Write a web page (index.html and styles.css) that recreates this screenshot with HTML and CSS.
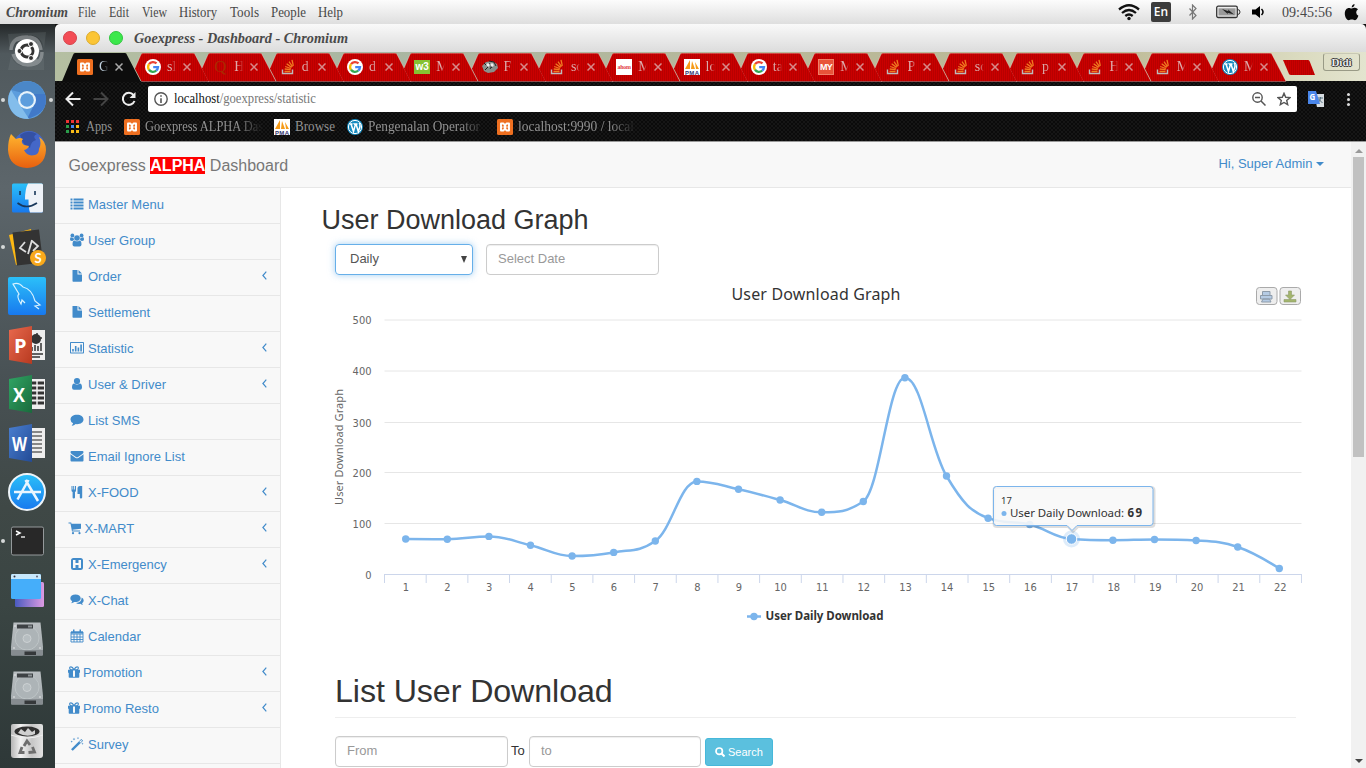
FILE: index.html
```html
<!DOCTYPE html>
<html lang="en">
<head>
<meta charset="utf-8">
<title>Goexpress - Dashboard</title>
<link rel="stylesheet" href="styles.css">
</head>
<body>
<svg width="0" height="0" class="defs">
  <defs>
    <linearGradient id="sky" x2="0" y2="1"><stop stop-color="#2bc0f9"/><stop offset="1" stop-color="#1879ee"/></linearGradient>
    <linearGradient id="red" x2="1" y2="1"><stop stop-color="#e8694e"/><stop offset="1" stop-color="#b83a20"/></linearGradient>
    <linearGradient id="green" x2="1" y2="1"><stop stop-color="#30a564"/><stop offset="1" stop-color="#1a6a3c"/></linearGradient>
    <linearGradient id="blue" x2="1" y2="1"><stop stop-color="#4a7fd0"/><stop offset="1" stop-color="#234b96"/></linearGradient>
    <linearGradient id="fox" x2="0" y2="1"><stop stop-color="#ffb52e"/><stop offset="1" stop-color="#e8600f"/></linearGradient>
    <linearGradient id="metal" x2="0" y2="1"><stop stop-color="#b9bec1"/><stop offset="1" stop-color="#a2a9ac"/></linearGradient>
    <linearGradient id="bin"><stop stop-color="#b5b5b5"/><stop offset=".3" stop-color="#f2f2f2"/><stop offset=".65" stop-color="#c6c6c6"/><stop offset="1" stop-color="#e2e2e2"/></linearGradient>
    <linearGradient id="violet"><stop stop-color="#4a5bc0"/><stop offset="1" stop-color="#dd9ae2"/></linearGradient>
    <pattern id="stripes" width="2" height="4" patternUnits="userSpaceOnUse"><rect width="2" height="4" fill="#ca0000"/><rect width="1" height="4" fill="#b80000"/></pattern>
  </defs>
  <symbol id="tab" viewBox="0 0 81 29"><path d="M5.9 15.4 12 1.5Q12.600 0 14 0H64Q65.500 0 66 1.500L80 28.500H12.600Z" fill="url(#stripes)"/><path d="M5.900 15.400 12 1.500Q12.600.5 14 .5H64Q65.500.5 66 1.500L80 28.500H12" fill="none" stroke="#fff" stroke-opacity=".28"/></symbol>
  <symbol id="close" viewBox="0 0 8 8"><path d="M.5.5l7 7m0-7l-7 7" stroke="currentColor" stroke-width="1.500"/></symbol>
  <symbol id="google" viewBox="0 0 16 16"><circle cx="8" cy="8" r="8" fill="#fff"/><g fill="none" stroke-width="2.300"><path d="M4 5.200A5 5 0 0 1 11.500 4.400" stroke="#ea4335"/><path d="M4 5.200a5 5 0 0 0 0 5.600" stroke="#fbbc05"/><path d="M4 10.800a5 5 0 0 0 7.200.9" stroke="#34a853"/><path d="M11.200 11.700A5 5 0 0 0 13 8.200H8.200" stroke="#4285f4"/></g></symbol>
  <symbol id="xampp" viewBox="0 0 16 16"><rect width="16" height="16" rx="1.500" fill="#ee6f20"/><path d="M4 4.500h2.500L8 6.500l1.500-2H12v3l-.7.500.7.500v3H9.500L8 9.500l-1.500 2H4v-3L4.700 8 4 7.500z" fill="none" stroke="#fff" stroke-width="1.900" stroke-linejoin="round"/><path d="M6.500 8h3" stroke="#fff" stroke-width="2.500"/></symbol>
  <symbol id="so" viewBox="0 0 16 16"><path d="M2.500 10.500v4h10v-4" fill="none" stroke="#bcbbbb" stroke-width="1.400"/><path d="M4.500 12.500h6M4.700 10l6 .7M5.200 7.500l5.700 2M6.600 4.800l5 3.600M9 2.600l3.500 5M12 .8l1.300 6" stroke="#f07b20" stroke-width="1.300"/></symbol>
  <symbol id="pma" viewBox="0 0 16 16"><rect width="16" height="16" fill="#fff"/><path d="M1 10 6 1v9zM7 10l1-8 3 8zM12 10l-1-7 4 7z" fill="#f69b18"/><text x="1" y="15.500" font-family="Liberation Sans" font-size="6" font-weight="700" fill="#333370" textLength="14">PMA</text></symbol>
  <symbol id="wp" viewBox="0 0 16 16"><circle cx="8" cy="8" r="8" fill="#168bc0"/><circle cx="8" cy="8" r="6.600" fill="none" stroke="#fff"/><path d="M2.500 5h3M4 5l2.500 7.500L8.300 6 7.500 5h3M9 5l2.300 7.500L13 7.500Q13.300 5 12 4" fill="none" stroke="#fff" stroke-width="1.500"/></symbol>

  <symbol id="i-list" viewBox="0 0 14 14"><path d="M.5 1.500h2v2h-2zM3.500 1.500h10v2h-10zM.5 4.500h2v2h-2zM3.500 4.500h10v2h-10zM.5 7.500h2v2h-2zM3.500 7.500h10v2h-10zM.5 10.500h2v2h-2zM3.500 10.500h10v2h-10z"/></symbol>
  <symbol id="i-users" viewBox="0 0 14 14"><circle cx="7" cy="5" r="2.800"/><circle cx="2.400" cy="2.400" r="1.900"/><circle cx="11.600" cy="2.400" r="1.900"/><path d="M2.500 11.500Q2.500 7.500 4.500 7.500q2.500 1.700 5 0 2 0 2 4 0 2-2 2h-5q-2 0-2-2M0 6.500Q0 4.300 1 4.300q1.300.7 2.600.2Q3.500 6 4.200 7 3 7 2.500 8 0 8 0 6.500M14 6.500Q14 4.300 13 4.300q-1.300.7-2.600.2.100 1.500-.6 2.500 1.200 0 1.700 1Q14 8 14 6.500"/></symbol>
  <symbol id="i-file" viewBox="0 0 14 14"><path d="M2.500 1h5v4.500H12V12q0 .8-.8.800H3.200q-.7 0-.7-.8zM8.500 1l3.500 3.500H8.500z"/></symbol>
  <symbol id="i-chart" viewBox="0 0 14 14"><path fill-rule="evenodd" d="M.8 1h12.400q.8 0 .8.800v9.900q0 .8-.8.800H.8q-.8 0-.8-.8V1.800Q0 1 .8 1M1 2v9.500h12V2zM2.200 8h1.600v2.500H2.200zM4.900 5h1.600v5.500H4.900zM7.600 6.500h1.600v4H7.600zM10.300 3.500h1.600v7h-1.600z"/></symbol>
  <symbol id="i-user" viewBox="0 0 14 14"><circle cx="7" cy="4" r="3.100"/><path d="M2 10.500Q2 6.600 4.200 6.600q2.800 2 5.600 0 2.200 0 2.200 3.900 0 2.300-2 2.300H4q-2 0-2-2.300"/></symbol>
  <symbol id="i-comment" viewBox="0 0 14 14"><path d="M7 1.800c3.800 0 6.500 2 6.500 4.700S10.800 11.200 7 11.200q-.8 0-1.300-.1Q4 12.700 2 12.800q-.4-.1-.1-.5.900-.8 1.200-2Q.5 8.800.5 6.500C.5 3.800 3.200 1.800 7 1.800"/></symbol>
  <symbol id="i-mail" viewBox="0 0 14 14"><path d="M1.500 2h11q1 0 1 1.200 0 1-1.500 2L8 8Q7 8.800 6 8L2 5.200Q.5 4.200.5 3.200.5 2 1.500 2M.5 5.300 5.700 9Q7 9.700 8.300 9l5.200-3.700v6.200q0 1-1 1h-11q-1 0-1-1z"/></symbol>
  <symbol id="i-food" viewBox="0 0 14 14"><path d="M1.500 1h1v3.500h.7V1h1v3.500H5V1h1v4.500q0 1-1 1.500v5.500q0 1-1.200 1t-1.200-1V7Q1.500 6.500 1.500 5.500zM7.500 3.500Q7.500 1 10 1h2.200v11.500q0 1-1.200 1t-1.200-1V9H7.500z"/></symbol>
  <symbol id="i-cart" viewBox="0 0 14 14"><path d="M.5 1.500h2.700l.3 1.200h9.500v5l-8.500 1 .2.800H12v1H4L2.500 2.500h-2z"/><circle cx="5" cy="12.200" r="1.100"/><circle cx="11.500" cy="12.200" r="1.100"/></symbol>
  <symbol id="i-h" viewBox="0 0 14 14"><path fill-rule="evenodd" d="M3.500 1h7Q13 1 13 3.500v7q0 2.500-2.500 2.500h-7Q1 13 1 10.500v-7Q1 1 3.500 1M3 3v8h2.500V8h3v3H11V3H8.500v3h-3V3z"/></symbol>
  <symbol id="i-comments" viewBox="0 0 14 14"><path d="M5.500 1.500c3 0 5.200 1.600 5.200 3.700S8.500 9 5.500 9q-.7 0-1.200-.1-1.200 1-3.200 1.300.9-.8 1.100-2Q.3 7 .3 5.200C.3 3.100 2.500 1.500 5.500 1.500M11.700 4.500q2 1.200 2 3 0 1.700-1.600 2.700.2 1 1 1.700-1.800-.1-2.800-1.100Q7.500 11.200 6 9.900q5.500-.3 5.700-5.400"/></symbol>
  <symbol id="i-cal" viewBox="0 0 14 14"><path d="M1 3h12v10H1zM1 5h12M4 5v8m3-8v8m3-8v8M1 8h12M1 10.500h12" fill="none" stroke="currentColor" stroke-width=".9"/><path d="M1 2.600h12v2H1zM3 .5h1.500v3H3zM9.500.5H11v3H9.500z"/></symbol>
  <symbol id="i-gift" viewBox="1 1.200 12 12"><path d="M1 5h5v4H1.700v-1H1zM8 5h5v3h-.7v1H8zM1.700 9H5v4H2.500q-.8 0-.8-.8zM9 9h3.300v3.200q0 .8-.8.800H9zM5 5h1v8H5zM8 5h1v8H8zM5 12h4v1H5z"/><path d="M7 5Q5.500 2 4 2 2.500 2 2.700 3.500 2.800 5 4.500 5H7q1.500-3 3-3 1.500 0 1.300 1.500Q11.200 5 9.500 5H7" fill="none" stroke="currentColor" stroke-width="1.200"/></symbol>
  <symbol id="i-magic" viewBox="0 0 14 14"><path d="M1 12.200 11.300 2l1.800 1.700L2.800 13.800zM4 .7l.4 1 1 .4-1 .4-.4 1-.4-1-1-.4 1-.4zM8 0l.3.8.8.3-.8.3-.3.800-.3-.8-.8-.3.8-.3zM12.500 5.500l.3.900.9.300-.9.300-.3.900-.3-.9-.9-.3.9-.3zM1.700 3.500l.3.800.8.300-.8.300-.3.800-.3-.8-.8-.3.800-.3z"/><path d="M9.300 4.800 11.300 2.900l.9.900-2 1.900z" fill="#f8f8f8"/></symbol>
  <symbol id="i-left" viewBox="0 0 5 9"><path d="M4.300.7.9 4.500l3.400 3.800" fill="none" stroke="currentColor" stroke-width="1.200"/></symbol>
  <symbol id="disk" viewBox="0 0 38 38"><path d="M5.500 2.500h27l2.500 24v8q0 1-1 1H4q-1 0-1-1v-8z" fill="url(#metal)"/><circle cx="19" cy="18" r="12" fill="#adb4b7" stroke="#bdc4c6"/><circle cx="19" cy="18.500" r="4" fill="#b7bec1" stroke="#ccd1d3"/><path d="M9 4.500h16v4H9z" fill="#3d4144"/><path d="M20 5.500h4v2h-4z" fill="#8c9295"/><path d="M3 30h32v4.500q0 1-1 1H4q-1 0-1-1z" fill="#868c90"/><path d="M16.500 31.500H28V35H16.500z" fill="#35383a"/><circle cx="7" cy="6" r=".8" fill="#eee"/><circle cx="6" cy="28" r=".8" fill="#eee"/><circle cx="32" cy="28" r=".8" fill="#eee"/></symbol>
</svg>

<header class="menubar">
  <nav class="menus">
    <svg class="t bi" width="62" height="24"><text y="17" textLength="62" lengthAdjust="spacingAndGlyphs">Chromium</text></svg>
    <svg class="t" width="19" height="24"><text y="17" textLength="18" lengthAdjust="spacingAndGlyphs">File</text></svg>
    <svg class="t" width="21" height="24"><text y="17" textLength="20" lengthAdjust="spacingAndGlyphs">Edit</text></svg>
    <svg class="t" width="25" height="24"><text y="17" textLength="25" lengthAdjust="spacingAndGlyphs">View</text></svg>
    <svg class="t" width="39" height="24"><text y="17" textLength="38" lengthAdjust="spacingAndGlyphs">History</text></svg>
    <svg class="t" width="29" height="24"><text y="17" textLength="29" lengthAdjust="spacingAndGlyphs">Tools</text></svg>
    <svg class="t" width="35" height="24"><text y="17" textLength="35" lengthAdjust="spacingAndGlyphs">People</text></svg>
    <svg class="t" width="26" height="24"><text y="17" textLength="25" lengthAdjust="spacingAndGlyphs">Help</text></svg>
  </nav>
  <div class="tray">
    <svg width="22" height="18" viewBox="0 0 22 18"><g fill="none" stroke="#111" stroke-width="2.300"><path d="M1 6.500Q11-2 21 6.500M4 10q7-6 14 0M7.300 13q3.700-3 7.400 0"/></g><circle cx="11" cy="15.500" r="1.700" fill="#111"/></svg>
    <span class="lang">En</span>
    <svg class="bt" width="10" height="16" viewBox="0 0 10 16"><path d="M1.500 4.500l6.500 7-3.500 3.500V1L8 4.500l-6.500 7" fill="none" stroke="#777" stroke-width="1.200"/></svg>
    <svg class="batt" width="25" height="14" viewBox="0 0 25 14"><rect x=".7" y="1.200" width="20.600" height="11.300" rx="1.500" fill="#eee" stroke="#333" stroke-width="1.300"/><path d="M2.500 3.300h17v7.200h-17z" fill="#999"/><path d="M21.500 4.500Q24 4.500 24 7t-2.500 2.500" fill="none" stroke="#333"/><path d="M6 4l6.500 2.300L12 4.500 18 9.500l-6.500-1.700.5 1.500z" fill="#222"/></svg>
    <svg class="vol" width="13" height="12" viewBox="0 0 13 12"><path d="M0 3.500h3.500L8 0v12L3.500 8.500H0z" fill="#000"/><path d="M9.500 3q3 3 0 6" fill="none" stroke="#000" stroke-width="1.500"/></svg>
    <svg class="t clock" width="51" height="24"><text y="17" textLength="50" lengthAdjust="spacingAndGlyphs">09:45:56</text></svg>
    <svg width="15" height="17" viewBox="0 0 15 17"><path d="M7.500 4.500C9 4.300 9.500 3.700 11 3.700q1.800 0 3 1.600-1.900 1.200-1.800 3.300.1 2.200 2.200 3.200Q13 15.900 11 16.300c-1.200 0-1.700-.7-3.200-.7s-2 .7-3.200.7C2.500 16 .8 12.500.8 9.500.8 6 2.700 3.900 5 3.900c1 0 1.700.6 2.500.6M7.700 3.500Q7.700.8 10.500 0q.3 2.900-2.800 3.500" fill="#0b0b0b"/></svg>
  </div>
</header>

<div class="desktop">
<aside class="dock">
  <svg viewBox="0 0 38 38"><path d="M2 18Q2 3 20 3q14 0 16 14L38 0 0 2zM36 20q0 15-16 15Q7 35 3 24L0 38h36z" fill="#8b9395" opacity=".18"/><path d="M3 18Q4 4 20 5q11 0 13 13M34 20q0 13-14 13Q8 32 5 22M8 8q18-7 22 12M30 28Q14 38 8 19" fill="none" stroke="#b7bcbd" stroke-width="3.500" opacity=".5"/><circle cx="19" cy="19" r="12" fill="#fff"/><circle cx="19" cy="19" r="6" fill="none" stroke="#333" stroke-width="3" stroke-dasharray="10.560 2" transform="rotate(70 19 19)"/><g fill="#333" stroke="#fff"><circle cx="11.500" cy="19" r="2.500"/><circle cx="23" cy="12" r="2.500"/><circle cx="23" cy="26" r="2.500"/></g></svg>
  <div class="running both"><svg viewBox="0 0 38 38"><circle cx="19" cy="19" r="19" fill="#5c9ddd"/><path d="M3 9A19 19 0 0 1 37 13H19z" fill="#4b87c7"/><path d="M19 13H37Q42 32 19 38L27 22z" fill="#4179c9"/><path d="M3 9l9 15 9 14Q3 38 0 20q0-6 3-11" fill="#83bdeb"/><circle cx="19" cy="19" r="9" fill="#e8f3fb"/><circle cx="19" cy="19" r="6.800" fill="#5c9ddd"/></svg></div>
  <svg viewBox="0 0 38 38"><circle cx="21" cy="17" r="16" fill="#4467c8"/><path d="M12 5Q20-1 29 4q-5 2-1 6-5 1-6 8-7-2-10-13" fill="#3451a5"/><path d="M3 4l5 5q4-2 7 0-3 3 1 6l5 1q-1 3-5 4 3 7 11 5 4-1 4-6 3-6 0-12 7 4 7 13-1 17-19 18Q1 37 0 20 0 10 3 4" fill="url(#fox)"/></svg>
  <svg viewBox="0 0 38 38"><rect x="4" y="4.500" width="31" height="29" rx="1.500" fill="url(#sky)"/><path d="M20 4.500h13.500q1.500 0 1.500 1.500v26q0 1.500-1.500 1.500H22q-1.500-4-1.500-13H17Q17 10 20 4.500" fill="#eef2f8"/><path d="M9.500 24q9 7 19.500 0M12 12v4m15-4v4" stroke="#18375b" stroke-width="1.600" fill="none"/></svg>
  <div class="running"><svg viewBox="0 0 38 38"><path d="M1 7l22-6 5 30-20 6z" fill="#fdb813"/><path d="M4.500 4.500 31 1.500l4 33-26 3z" fill="#333"/><path d="M17 14l-5 6 6 4m6-11 6 5-5 5m-1-11-4 14" fill="none" stroke="#ddd" stroke-width="1.800"/><circle cx="30" cy="30" r="8" fill="#f9a91c"/><text x="26.600" y="34.500" font-family="Lato" font-size="13" font-weight="700" fill="#fff">S</text></svg></div>
  <svg viewBox="0 0 38 38"><rect width="38" height="38" rx="2" fill="url(#sky)"/><path d="M17 26l-3-3-1 4Q8 19 11 17 8 12 5 7q6-2 10 3 9 2 12 14l5 4-5 1 4 3" fill="none" stroke="#d7f2ff" stroke-width="1.200"/></svg>
  <svg viewBox="0 0 38 38"><path d="M22 4h15v30H22z" fill="#eee"/><circle cx="28" cy="13" r="5" fill="#333"/><path d="M29 7v5h5M24 25v-4m3 4v-6m3 6v-5m3 5v-8M24 28h11M24 31h8" stroke="#333" stroke-width="1.500" fill="none"/><path d="M1 4 24 0v38L1 34z" fill="url(#red)"/><text x="6" y="27" font-family="Open Sans" font-size="20" font-weight="700" fill="#fff">P</text></svg>
  <svg viewBox="0 0 38 38"><path d="M22 4h15v30H22z" fill="#eee"/><path d="M23 8h13M23 13h13M23 18h13M23 23h13M23 28h13" stroke="#333" stroke-width="3"/><path d="M29 4v28" stroke="#eee" stroke-width="1.500"/><path d="M1 4 24 0v38L1 34z" fill="url(#green)"/><text x="5" y="27" font-family="Open Sans" font-size="20" font-weight="700" fill="#fff" textLength="12" lengthAdjust="spacingAndGlyphs">X</text></svg>
  <svg viewBox="0 0 38 38"><path d="M22 4h15v30H22z" fill="#eee"/><path d="M24 8h10M24 12h10M24 16h10M24 20h10M24 24h10M24 28h10" stroke="#666" stroke-width="1.300"/><path d="M1 4 24 0v38L1 34z" fill="url(#blue)"/><text x="4" y="27" font-family="Open Sans" font-size="20" font-weight="700" fill="#fff" textLength="15" lengthAdjust="spacingAndGlyphs">W</text></svg>
  <svg viewBox="0 0 38 38"><circle cx="19" cy="19" r="18" fill="url(#sky)" stroke="#eef4f8" stroke-width="2"/><path d="M6 19h27M20.500 7 9.500 26.500M17.500 7 30 28" stroke="#eaf6ff" stroke-width="2.500"/></svg>
  <div class="running"><svg viewBox="0 0 38 38"><rect x="3.500" y="5" width="32" height="28" rx="1.500" fill="#282828" stroke="#94999b"/><path d="M8 9l4 2-4 2" fill="none" stroke="#fff" stroke-width="1.500"/><path d="M13 15h4" stroke="#fff" stroke-width="1.300"/></svg></div>
  <svg viewBox="0 0 38 38"><rect x="7" y="11" width="29" height="25" rx="1.500" fill="url(#violet)"/><rect x="3" y="3" width="30" height="25" rx="1.500" fill="#45aefa"/><path d="M3 4.500Q3 3 4.500 3h27Q33 3 33 4.500V8H3z" fill="#c8e8fc"/><circle cx="6.500" cy="5.500" r="1" fill="#334"/><circle cx="29" cy="5.500" r="1" fill="#667"/></svg>
  <svg viewBox="0 0 38 38"><use href="#disk"/></svg>
  <svg viewBox="0 0 38 38"><use href="#disk"/></svg>
  <svg class="trash" viewBox="0 0 38 38"><path d="M3 4q0-2 2-2h28q2 0 2 2v29q0 3-3 3H6q-3 0-3-3z" fill="url(#bin)"/><ellipse cx="19" cy="9.500" rx="12.500" ry="5" fill="#303030"/><path d="M10 11l3-4 4 3 3-4 4 4 3-2v4q-8 4-17-1" fill="#cfcfcf"/><path d="M3 13q16 6 32 0" stroke="#eee" fill="none"/><path d="M16 24l3-5 3 4m2.500 2 2 5-6 .5m-4 0H12l2-5.500" fill="none" stroke="#6e6e6e" stroke-width="2.800"/></svg>
</aside>

<section class="window">
  <div class="titlebar">
    <i class="light r"></i><i class="light y"></i><i class="light g"></i>
    <svg class="t bi" width="216" height="28"><text y="19" textLength="214" lengthAdjust="spacingAndGlyphs">Goexpress - Dashboard - Chromium</text></svg>
  </div>
  <div class="tabs">
    <div class="tab active"><svg class="shape" viewBox="0 0 81 29"><path d="M0 29Q1 29 2 26L12 2Q12.600 0 14 0H64Q65.500 0 66 2L80 29Z" fill="#0d0d0d"/></svg><svg class="fav"><use href="#xampp"/></svg><span>G</span><svg class="x"><use href="#close"/></svg></div>
    <div class="tab"><svg class="shape"><use href="#tab"/></svg><svg class="fav"><use href="#google"/></svg><span>sl</span><svg class="x"><use href="#close"/></svg></div>
    <div class="tab"><svg class="shape"><use href="#tab"/></svg><b class="fav quora">Q</b><span>H</span><svg class="x"><use href="#close"/></svg></div>
    <div class="tab"><svg class="shape"><use href="#tab"/></svg><svg class="fav"><use href="#so"/></svg><span>d</span><svg class="x"><use href="#close"/></svg></div>
    <div class="tab"><svg class="shape"><use href="#tab"/></svg><svg class="fav"><use href="#google"/></svg><span>d</span><svg class="x"><use href="#close"/></svg></div>
    <div class="tab"><svg class="shape"><use href="#tab"/></svg><b class="fav w3">w3</b><span>M</span><svg class="x"><use href="#close"/></svg></div>
    <div class="tab"><svg class="shape"><use href="#tab"/></svg><svg class="fav" viewBox="0 0 16 16"><path d="M0 7l4-4 6-1 5 3 1 4-4 4-6 1-4-2z" fill="#89908b"/><path d="M2 4l4 4-3 3M7 4l3 5m1-4-3 5M7 2l5 1 2 4" stroke="#222" fill="none"/><circle cx="6" cy="6" r="1.700" fill="#eee"/><circle cx="10" cy="6" r="1.700" fill="#eee"/></svg><span>F</span><svg class="x"><use href="#close"/></svg></div>
    <div class="tab"><svg class="shape"><use href="#tab"/></svg><svg class="fav"><use href="#so"/></svg><span>so</span><svg class="x"><use href="#close"/></svg></div>
    <div class="tab"><svg class="shape"><use href="#tab"/></svg><b class="fav cin">ahom</b><span>M</span><svg class="x"><use href="#close"/></svg></div>
    <div class="tab"><svg class="shape"><use href="#tab"/></svg><svg class="fav"><use href="#pma"/></svg><span>lo</span><svg class="x"><use href="#close"/></svg></div>
    <div class="tab"><svg class="shape"><use href="#tab"/></svg><svg class="fav"><use href="#google"/></svg><span>ta</span><svg class="x"><use href="#close"/></svg></div>
    <div class="tab"><svg class="shape"><use href="#tab"/></svg><b class="fav my">MY</b><span>M</span><svg class="x"><use href="#close"/></svg></div>
    <div class="tab"><svg class="shape"><use href="#tab"/></svg><svg class="fav"><use href="#so"/></svg><span>P</span><svg class="x"><use href="#close"/></svg></div>
    <div class="tab"><svg class="shape"><use href="#tab"/></svg><svg class="fav"><use href="#so"/></svg><span>so</span><svg class="x"><use href="#close"/></svg></div>
    <div class="tab"><svg class="shape"><use href="#tab"/></svg><svg class="fav"><use href="#so"/></svg><span>p</span><svg class="x"><use href="#close"/></svg></div>
    <div class="tab"><svg class="shape"><use href="#tab"/></svg><svg class="fav"><use href="#so"/></svg><span>H</span><svg class="x"><use href="#close"/></svg></div>
    <div class="tab"><svg class="shape"><use href="#tab"/></svg><svg class="fav"><use href="#so"/></svg><span>M</span><svg class="x"><use href="#close"/></svg></div>
    <div class="tab"><svg class="shape"><use href="#tab"/></svg><svg class="fav"><use href="#wp"/></svg><span>M</span><svg class="x"><use href="#close"/></svg></div>
    <svg class="newtab" viewBox="0 0 32 15"><path d="M0 0h25q1 0 1.500 1L32 15H8Q6.500 15 6 14z" fill="url(#stripes)"/></svg>
    <div class="profile">Didi</div>
  </div>
  <div class="toolbar">
    <svg class="nav" viewBox="0 0 16 16"><path d="M15.500 8H2M8 1.500 1.500 8 8 14.500" fill="none" stroke="#eee" stroke-width="2"/></svg>
    <svg class="nav" viewBox="0 0 16 16"><path d="M.5 8H14M8 1.500 14.500 8 8 14.500" fill="none" stroke="#444" stroke-width="2"/></svg>
    <svg class="nav" viewBox="0 0 16 16"><path d="M13.500 10A6 6 0 1 1 12.500 4" fill="none" stroke="#eee" stroke-width="2"/><path d="M14.500 1v6h-6z" fill="#eee"/></svg>
    <div class="omnibox">
      <svg width="14" height="14" viewBox="0 0 14 14"><circle cx="7" cy="7" r="6.200" fill="none" stroke="#555" stroke-width="1.400"/><path d="M7 3.200v1.600m0 1.400V11" stroke="#555" stroke-width="1.600"/></svg>
      <svg class="t url" width="143" height="26"><text y="17" textLength="142" lengthAdjust="spacingAndGlyphs"><tspan fill="#111">localhost</tspan><tspan fill="#777">/goexpress/statistic</tspan></text></svg>
      <svg class="mag" width="14" height="14" viewBox="0 0 14 14"><circle cx="5.500" cy="5.500" r="4.700" fill="none" stroke="#555" stroke-width="1.400"/><path d="M3 5.500h5M9 9l4.500 4.500" stroke="#555" stroke-width="1.500"/></svg>
      <svg width="14" height="14" viewBox="0 0 14 14"><path d="M7 1.300l1.700 4 4.300.3-3.300 2.800 1 4.300L7 10.500l-3.700 2.200 1-4.300L1 5.600l4.300-.3z" fill="none" stroke="#555" stroke-width="1.400"/></svg>
    </div>
    <svg class="trans" width="17" height="17" viewBox="0 0 17 17"><path d="M6 3h10v13H9z" fill="#d8dde1"/><path d="M10 7h5m-2.500-1v1q0 3-3 5m1-4 4 4" stroke="#55707e" fill="none"/><path d="M0 0h8l4 13H0z" fill="#4a86ea"/><text x="1.500" y="9" font-family="Open Sans" font-size="8" font-weight="700" fill="#fff">G</text></svg>
    <i class="dots"></i>
  </div>
  <div class="bookmarks">
    <i class="apps"></i>
    <svg class="t" width="38" height="24"><text y="14" textLength="26" lengthAdjust="spacingAndGlyphs">Apps</text></svg>
    <svg class="fav"><use href="#xampp"/></svg>
    <svg class="t fade" width="118" height="24"><text y="14" textLength="118" lengthAdjust="spacingAndGlyphs">Goexpress ALPHA Das</text></svg>
    <svg class="fav g11"><use href="#pma"/></svg>
    <svg class="t" width="52" height="24"><text y="14" textLength="40" lengthAdjust="spacingAndGlyphs">Browse</text></svg>
    <svg class="fav"><use href="#wp"/></svg>
    <svg class="t fade" width="118" height="24"><text y="14" textLength="112" lengthAdjust="spacingAndGlyphs">Pengenalan Operator</text></svg>
    <svg class="fav g11"><use href="#xampp"/></svg>
    <svg class="t fade" width="118" height="24"><text y="14" textLength="116" lengthAdjust="spacingAndGlyphs">localhost:9990 / local</text></svg>
  </div>

  <div class="viewport">
    <div class="page">
      <header class="navbar"><div class="brand">Goexpress <b>ALPHA</b> Dashboard</div><div class="hi">Hi, Super Admin <i></i></div></header>
      <div class="cols">
        <ul class="side">
          <li><svg class="fa"><use href="#i-list"/></svg>Master Menu</li>
          <li><svg class="fa"><use href="#i-users"/></svg>User Group</li>
          <li><svg class="fa"><use href="#i-file"/></svg>Order<svg class="ar"><use href="#i-left"/></svg></li>
          <li><svg class="fa"><use href="#i-file"/></svg>Settlement</li>
          <li><svg class="fa"><use href="#i-chart"/></svg>Statistic<svg class="ar"><use href="#i-left"/></svg></li>
          <li><svg class="fa"><use href="#i-user"/></svg>User &amp; Driver<svg class="ar"><use href="#i-left"/></svg></li>
          <li><svg class="fa"><use href="#i-comment"/></svg>List SMS</li>
          <li><svg class="fa"><use href="#i-mail"/></svg>Email Ignore List</li>
          <li><svg class="fa"><use href="#i-food"/></svg>X-FOOD<svg class="ar"><use href="#i-left"/></svg></li>
          <li class="nar"><svg class="fa"><use href="#i-cart"/></svg>X-MART<svg class="ar"><use href="#i-left"/></svg></li>
          <li><svg class="fa"><use href="#i-h"/></svg>X-Emergency<svg class="ar"><use href="#i-left"/></svg></li>
          <li><svg class="fa"><use href="#i-comments"/></svg>X-Chat</li>
          <li><svg class="fa"><use href="#i-cal"/></svg>Calendar</li>
          <li class="nar2"><svg class="fa"><use href="#i-gift"/></svg>Promotion<svg class="ar"><use href="#i-left"/></svg></li>
          <li class="nar2"><svg class="fa"><use href="#i-gift"/></svg>Promo Resto<svg class="ar"><use href="#i-left"/></svg></li>
          <li><svg class="fa"><use href="#i-magic"/></svg>Survey</li>
          <li></li>
        </ul>
        <main>
          <h2>User Download Graph</h2>
          <div class="filters"><div class="field select">Daily<i></i></div><div class="field date">Select Date</div></div>
          <svg id="chart" width="1070" height="385" viewBox="281 275 1070 385">
            <g id="grid"></g>
            <text class="title" x="731.500" y="300" textLength="169">User Download Graph</text>
            <text class="axis" transform="translate(343 505) rotate(-90)" textLength="116">User Download Graph</text>
            <path id="line" class="line"/>
            <g id="dots"></g>
            <circle cx="1071.500" cy="539" r="8.500" fill="#7cb5ec" opacity=".25"/><circle cx="1071.500" cy="539" r="5.300" fill="#7cb5ec" stroke="#fff"/>
            <g transform="translate(1 1)" fill="none" stroke="#000" stroke-opacity=".13" stroke-width="3"><path d="M996 486.500h154q3 0 3 3v33q0 3-3 3h-73l-5 5-5-5h-71q-3 0-3-3v-33q0-3 3-3"/></g>
            <path d="M996.500 486.500h153.500q3 0 3 3v33q0 3-3 3h-73l-5 5-5-5h-70.500q-3 0-3-3v-33q0-3 3-3" fill="#f8f8f8" fill-opacity=".88" stroke="#7cb5ec"/>
            <text class="tip small" x="1001" y="504" textLength="11">17</text>
            <circle cx="1004" cy="513.500" r="2.500" fill="#7cb5ec"/>
            <text class="tip" x="1010" y="517" textLength="114">User Daily Download:</text><text class="tip" x="1127.500" y="517" font-weight="700" textLength="14.500">69</text>
            <path d="M747 616.500h14" class="line"/><circle cx="754" cy="616.500" r="3.700" fill="#7cb5ec"/>
            <text class="tip" x="765.500" y="620" font-weight="700" textLength="118">User Daily Download</text>
            <g fill="#eee" stroke="#aaa"><rect x="1256.500" y="287.500" width="20.500" height="17" rx="3"/><rect x="1280" y="287.500" width="20.500" height="17" rx="3"/></g>
            <g fill="#b5cbe4" stroke="#8d9baa"><path d="M1262.500 291.500h7.500v4h-7.500zM1260.500 295.500h11.500v3.500h-11.500zM1263 299h6.500l1.500 3h-9.500z"/></g>
            <path d="M1288.500 291h3v4h3l-4.500 4.500-4.500-4.500h3zM1284 299.500h12v2.500h-12z" fill="#a3b56d" stroke="#8f9b6b" stroke-width=".6"/>
          </svg>
          <h1>List User Download</h1>
          <div class="search"><div class="field w173">From</div><span>To</span><div class="field w172">to</div><div class="btn"><svg width="10" height="10" viewBox="0 0 10 10"><circle cx="4.200" cy="4.200" r="3.200" fill="none" stroke="#fff" stroke-width="1.700"/><path d="M6.500 6.500l3 3" stroke="#fff" stroke-width="2"/></svg>Search</div></div>
        </main>
      </div>
    </div>
    <div class="scroll"><i class="up"></i><div class="thumb"></div><i class="down"></i></div>
  </div>
</section>
</div>
<script src="chart.js"></script>
</body>
</html>
```
FILE: styles.css
```css
* { box-sizing: border-box; }
body { margin: 0; width: 1366px; height: 768px; overflow: hidden; font: 13px "Liberation Sans", Arial, sans-serif; background: #333a3c; display: flex; flex-direction: column; }
svg { display: block; flex: none; }
.defs { position: absolute; }
.t { overflow: visible; }
.t text { font: 14.5px "Liberation Serif", serif; fill: #484848; }
.t.bi text { font-weight: 700; font-style: italic; fill: #4a4a4a; }
.menubar { height: 24px; flex: none; display: flex; justify-content: space-between; background: linear-gradient(#fcfcfc, #dedede); }
.menus { display: flex; gap: 12px; padding-left: 6px; }
.menus svg:first-child { margin-right: -2.500px; }
.tray { display: flex; align-items: center; padding-right: 7px; }
.lang { width: 20px; height: 20px; margin-left: 11px; background: #3c3c3c; color: #fff; border-radius: 2px; font: 600 12px/20px "Open Sans", sans-serif; text-align: center; }
.bt { margin-left: 17px; }
.batt { margin-left: 18px; }
.vol { margin-left: 11px; }
.clock { margin: 0 11px 0 17px; }
.desktop { flex: 1; min-height: 0; display: flex; }
.dock { width: 55px; flex: none; display: flex; flex-direction: column; gap: 11px; padding: 8px 0 0 8px; background: linear-gradient(#242829, #50595d 4%, #5d666b 22%, #485154 48%, #3f4846 65%, #3a4543 78%, #2e3838); }
.dock svg { width: 38px; height: 38px; }
.dock .trash { margin-top: 4px; }
.running { position: relative; }
.running::before, .both::after { content: ""; position: absolute; left: -7px; top: 17px; width: 4px; height: 4px; border-radius: 50%; background: #d5d8d9; }
.both::after { left: 41px; }
.window { width: 1311px; display: flex; flex-direction: column; background: #101010; }
.titlebar { height: 28px; flex: none; display: flex; align-items: center; padding-left: 8px; background: linear-gradient(#f9f9f9, #dcdcdc); border-radius: 5px 5px 0 0; }
.light { width: 14px; height: 14px; border-radius: 50%; margin-right: 9px; }
.r { background: #f34c55; border: 1px solid #d6434b; }
.y { background: #fbc535; border: 1px solid #dcab2c; }
.g { background: #3be84b; border: 1px solid #31c540; margin-right: 11px; }
.tabs { height: 29px; flex: none; display: flex; align-items: flex-start; padding: 1px 0 0 6px; background: linear-gradient(90deg, #b5bfa2, #a9b6a2 25%, #b9b99a 55%, #bcb995 80%, #dbdbc0 95%, #e3e4cf); }
.tab { position: relative; width: 80px; margin-right: -12.700px; height: 28px; flex: none; display: flex; align-items: center; padding-left: 16px; color: #d88a8a; }
.tab .shape { position: absolute; left: 0; top: 0; width: 81px; height: 29px; }
.tab > :not(.shape) { position: relative; }
.tab span { width: 9px; margin-left: 6px; overflow: hidden; white-space: nowrap; font: 14px "Liberation Serif", serif; color: #ddaaaa; -webkit-mask: linear-gradient(90deg, #000 50%, transparent); }
.tab.active span { color: #bfd0dd; }
.tab.active { color: #aaa; margin-right: -12px; }
.fav { width: 16px; height: 16px; flex: none; }
.x { width: 8px; height: 8px; margin-left: 7px; }
b.fav { text-align: center; overflow: hidden; }
.quora { font: 17px/15px "Liberation Serif", serif; color: #a92b00; }
.w3 { background: #86c232; color: #fff; font: 700 10px/14px "Liberation Sans", sans-serif; height: 14px; }
.cin { background: #fff; color: #e23e4a; font: 700 6px/16px "Liberation Serif", serif; letter-spacing: -.3px; }
.my { background: #e8543a; border: 1px solid #f08068; color: #fff; font: 700 9px/15px "Liberation Sans", sans-serif; letter-spacing: -.5px; }
.newtab { width: 32px; height: 15px; margin: 7px 0 0 10px; }
.profile { width: 37px; height: 18px; flex: none; margin-left: auto; margin-right: 6px; border: 1px solid #999a86; border-top-color: #c8c8b4; border-radius: 3px; text-align: center; font: 700 11px/17px "Liberation Serif", serif; color: #eee; text-shadow: 0 0 1px #000, 1px 0 #444, -1px 0 #444, 0 1px #444, 0 -1px #444; }
.toolbar, .bookmarks { background: repeating-conic-gradient(#0b0b0b 0 25%, #161616 0 50%) 0 0 / 4px 4px; }
.toolbar { height: 36px; flex: none; display: flex; align-items: center; padding-left: 10px; }
.nav { width: 16px; height: 16px; margin-right: 12px; }
.omnibox { width: 1149px; height: 26px; margin-left: -1px; background: #fff; border-radius: 2px; display: flex; align-items: center; padding: 0 6px; }
.url { margin-left: 6px; }
.mag { margin: 0 11px 0 auto; }
.trans { margin-left: 11px; }
.dots { width: 3px; height: 3px; border-radius: 50%; margin-left: 22px; background: #ddd; box-shadow: 0 -5px #ddd, 0 5px #ddd; }
.bookmarks { height: 25px; flex: none; display: flex; padding-left: 11px; border-bottom: 1px solid #999; }
.bookmarks .fav { margin: 2px 5px 0 0; }
.bookmarks .g11 { margin-left: 11px; }
.bookmarks text { fill: #929292; }
.apps { width: 3px; height: 3px; margin: 3px 16.500px 0 0; background: #e33; box-shadow: 5px 0 #e33, 10px 0 #e33, 0 5px #2a9d4a, 5px 5px #4285f4, 10px 5px #f9bb16, 0 10px #2a9d4a, 5px 10px #f9bb16, 10px 10px #f9bb16; }
.bookmarks .apps + svg { margin-right: .5px; }
.fade { -webkit-mask: linear-gradient(90deg, #000 78%, transparent); }
.viewport { flex: 1; min-height: 0; display: flex; background: #fff; }
.page { width: 1296px; height: 626px; overflow: hidden; }
.navbar { height: 46px; background: #f8f8f8; border-bottom: 1px solid #e7e7e7; display: flex; justify-content: space-between; padding: 0 27px 0 13.500px; }
.brand { font-size: 16px; line-height: 47px; color: #777; }
.brand b { background: #f00; color: #fff; }
.hi { line-height: 43px; color: #428bca; }
.hi i { display: inline-block; border: 4px solid transparent; border-top-color: #428bca; border-bottom: 0; vertical-align: 2px; }
.cols { display: flex; }
.side { list-style: none; margin: 0; padding: 0; width: 226px; flex: none; background: #f8f8f8; border-right: 1px solid #e7e7e7; }
.side li { height: 36px; border-bottom: 1px solid #e7e7e7; display: flex; align-items: center; padding: 0 13px 2px 14.500px; color: #428bca; }
.fa { width: 14px; height: 14px; margin: 0 4.500px 1px 0; fill: currentColor; }
.side .nar, .side .nar2 { padding-left: 13px; }
.nar .fa { margin-right: 2.500px; }
.nar2 .fa { width: 12px; margin-right: 3px; }
.ar { width: 5px; height: 9px; margin: 0 0 3px auto; }
main { width: 1070px; flex: none; }
h1, h2 { margin: 0; font-weight: 400; color: #333; }
h2 { font-size: 27px; line-height: 30px; height: 56px; padding: 17px 0 0 40.500px; }
.filters { display: flex; gap: 13px; padding-left: 54px; height: 31px; }
.field { height: 31px; border: 1px solid #ccc; border-radius: 4px; padding: 0 11px; line-height: 28px; color: #999; box-shadow: inset 0 1px 1px rgba(0,0,0,.07); }
.select { width: 138px; border-color: #66afe9; color: #555; padding: 0 5px 1px 14px; display: flex; justify-content: space-between; align-items: center; box-shadow: 0 0 7px rgba(102,175,233,.6); }
.select i { border: 3.500px solid transparent; border-top: 7px solid #444; border-bottom: 0; }
.date { width: 173px; }
#chart text { font-family: "Noto Sans", sans-serif; }
#chart .title { font-size: 16px; fill: #333; }
#chart .axis { font-size: 11px; fill: #666; }
#chart .tick { font: 11px "DejaVu Sans Condensed", "DejaVu Sans", sans-serif; font-stretch: condensed; fill: #666; }
#chart .tip { font-size: 11.500px; fill: #333; }
#chart .small { font-size: 9.500px; }
.line { fill: none; stroke: #7cb5ec; stroke-width: 2.500; }
#dots { fill: #7cb5ec; }
h1 { font-size: 32.200px; letter-spacing: -.08px; line-height: 36px; height: 58px; margin: 0 55px 18px 54px; padding-top: 13px; border-bottom: 1px solid #eee; }
.search { display: flex; padding-left: 54px; line-height: 29px; color: #333; }
.search span { margin: 0 4px 0 3px; width: 14px; white-space: nowrap; }
.w173 { width: 173px; }
.w172 { width: 172px; }
.btn { width: 68px; height: 28px; margin: 2px 0 0 4px; padding-left: 9px; background: #5bc0de; border: 1px solid #46b8da; border-radius: 3px; color: #fff; font-size: 11px; line-height: 26px; display: flex; align-items: center; gap: 3px; }
.scroll { width: 15px; flex: none; background: #f1f1f1; padding: 6px 2px 0; height: 626px; display: flex; flex-direction: column; }
.thumb { width: 11px; height: 300px; background: #c1c1c1; margin: 4px 0 auto; }
.up { border: 4px solid transparent; border-bottom-color: #999; border-top: 0; width: 0; height: 5px; align-self: center; }
.down { border: 4px solid transparent; border-top-color: #444; border-bottom: 0; width: 0; align-self: center; margin-bottom: 5px; }
```
FILE: chart.js
```js
var NS = 'http://www.w3.org/2000/svg';
function add(parent, tag, attrs, text) {
  var el = document.createElementNS(NS, tag);
  for (var k in attrs) el.setAttribute(k, attrs[k]);
  if (text !== undefined) el.textContent = text;
  document.getElementById(parent).appendChild(el);
}
[320, 371, 422.5, 472.5, 523.5, 574.5].forEach(function (y, i) {
  add('grid', 'path', { d: 'M384.5 ' + y + 'H1301.5', stroke: i === 5 ? '#ccd6eb' : '#e6e6e6' });
  add('grid', 'text', { x: 371.5, y: y + 4, 'class': 'tick', 'text-anchor': 'end' }, String(500 - i * 100));
});
var ys = [539, 539.2, 536.4, 545.3, 556, 552.4, 541, 481.4, 489.3, 500, 512.3, 501.5, 377.8, 476, 518.2, 524.5, 539, 540.2, 539.5, 540.5, 547, 568.5];
for (var i = 0; i <= 22; i++) {
  var tx = 384.5 + i * 41.68;
  add('grid', 'path', { d: 'M' + tx + ' 574v9', stroke: '#ccd6eb' });
  if (i < 22) add('grid', 'text', { x: 405.8 + i * 41.64, y: 591, 'class': 'tick', 'text-anchor': 'middle' }, String(i + 1));
}
var pts = ys.map(function (y, i) { return { x: 405.7 + i * 41.6, y: y }; });
/* Smoothed line: control points sit 2/5 of the way to each neighbour and never overshoot it. */
var d = 'M' + pts[0].x + ' ' + pts[0].y, prev = pts[0];
for (i = 1; i < pts.length; i++) {
  var p = pts[i], a = pts[i - 1], b = pts[i + 1], lx = p.x, ly = p.y, rx, ry;
  if (b) {
    lx = (1.5 * p.x + a.x) / 2.5; ly = (1.5 * p.y + a.y) / 2.5;
    rx = (1.5 * p.x + b.x) / 2.5; ry = (1.5 * p.y + b.y) / 2.5;
    var c = (ry - ly) * (rx - p.x) / (rx - lx) + p.y - ry;
    ly += c; ry += c;
    if (ly > a.y && ly > p.y) { ly = Math.max(a.y, p.y); ry = 2 * p.y - ly; }
    else if (ly < a.y && ly < p.y) { ly = Math.min(a.y, p.y); ry = 2 * p.y - ly; }
    if (ry > b.y && ry > p.y) { ry = Math.max(b.y, p.y); ly = 2 * p.y - ry; }
    else if (ry < b.y && ry < p.y) { ry = Math.min(b.y, p.y); ly = 2 * p.y - ry; }
  }
  d += 'C' + [prev.x, prev.y, lx, ly, p.x, p.y].join(' ');
  prev = b ? { x: rx, y: ry } : p;
}
document.getElementById('line').setAttribute('d', d);
pts.forEach(function (p) { add('dots', 'circle', { cx: p.x, cy: p.y, r: 3.7 }); });
```
